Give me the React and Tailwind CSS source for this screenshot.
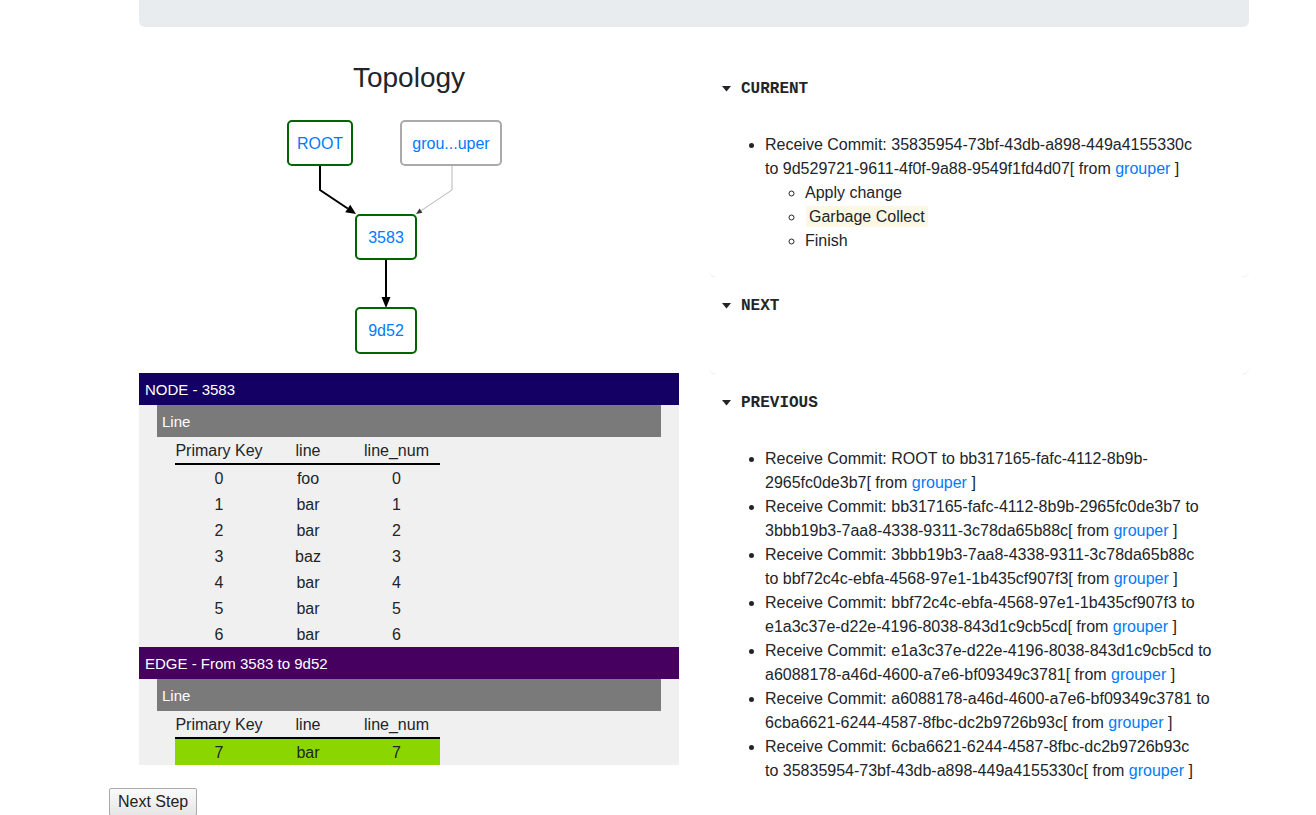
import React from 'react'

const nodeRows = [
  [0, 'foo', 0],
  [1, 'bar', 1],
  [2, 'bar', 2],
  [3, 'baz', 3],
  [4, 'bar', 4],
  [5, 'bar', 5],
  [6, 'bar', 6],
]

// commit log, split where the reference wraps
const previous = [
  ['Receive Commit: ROOT to bb317165-fafc-4112-8b9b-', '2965fc0de3b7'],
  ['Receive Commit: bb317165-fafc-4112-8b9b-2965fc0de3b7 to', '3bbb19b3-7aa8-4338-9311-3c78da65b88c'],
  ['Receive Commit: 3bbb19b3-7aa8-4338-9311-3c78da65b88c', 'to bbf72c4c-ebfa-4568-97e1-1b435cf907f3'],
  ['Receive Commit: bbf72c4c-ebfa-4568-97e1-1b435cf907f3 to', 'e1a3c37e-d22e-4196-8038-843d1c9cb5cd'],
  ['Receive Commit: e1a3c37e-d22e-4196-8038-843d1c9cb5cd to', 'a6088178-a46d-4600-a7e6-bf09349c3781'],
  ['Receive Commit: a6088178-a46d-4600-a7e6-bf09349c3781 to', '6cba6621-6244-4587-8fbc-dc2b9726b93c'],
  ['Receive Commit: 6cba6621-6244-4587-8fbc-dc2b9726b93c', 'to 35835954-73bf-43db-a898-449a4155330c'],
]

function Caret() {
  return (
    <svg width="9" height="6" viewBox="0 0 9 6" className="shrink-0">
      <polygon points="0,0 9,0 4.5,5.5" fill="#212529" />
    </svg>
  )
}

function Section({ title, children, last }) {
  return (
    <div className={`bg-white rounded-lg shadow-[0_2px_2px_-1px_rgba(0,0,0,0.1)] pl-[13px] pr-3 pt-5 ${last ? 'pb-12' : 'pb-6'}`}>
      <div className="flex items-center gap-[10px] h-[18px]">
        <Caret />
        <span className="font-['Liberation_Mono',monospace] font-bold text-base">{title}</span>
      </div>
      <div className="mt-[35px]">{children}</div>
    </div>
  )
}

function From() {
  return (
    <>
      [ from <a href="#" className="text-[#007bff]">grouper</a> ]
    </>
  )
}

function Topology() {
  return (
    <svg width="540" height="273" className="block mt-[5px]" fontFamily="Liberation Sans, Arial, sans-serif" fontSize="16">
      {/* edges */}
      <path d="M181 65 L181 90 L208.7 108.5" stroke="#000" strokeWidth="2" fill="none" />
      <polygon points="217,114 206.2,112.2 211.2,104.8" fill="#000" />
      <path d="M313 65 L313 90 L282 110.7" stroke="#b5b5b5" strokeWidth="1" fill="none" />
      <polygon points="277,114 280.6,108.6 283.4,112.8" fill="#333" />
      <path d="M247 159 L247 198" stroke="#000" strokeWidth="2" />
      <polygon points="242.5,197 251.5,197 247,208" fill="#000" />

      {/* nodes */}
      <rect x="149" y="21" width="64" height="44" rx="4" fill="#fff" stroke="#006400" strokeWidth="2" />
      <text x="181" y="48.5" textAnchor="middle" fill="#007bff">ROOT</text>
      <rect x="262" y="21" width="100" height="44" rx="4" fill="#fff" stroke="#aaaaaa" strokeWidth="2" />
      <text x="312" y="48.5" textAnchor="middle" fill="#007bff">grou...uper</text>
      <rect x="217" y="115" width="60" height="44" rx="4" fill="#fff" stroke="#006400" strokeWidth="2" />
      <text x="247" y="142.5" textAnchor="middle" fill="#007bff">3583</text>
      <rect x="217" y="208" width="60" height="45" rx="4" fill="#fff" stroke="#006400" strokeWidth="2" />
      <text x="247" y="236" textAnchor="middle" fill="#007bff">9d52</text>
    </svg>
  )
}

function LineTable({ rows, highlight }) {
  return (
    <table className="ml-[18px] border-separate border-spacing-0 text-base">
      <thead>
        <tr className="h-[28px]">
          <th className="w-[88px] p-0 pt-px font-normal text-center border-b-2 border-black">Primary Key</th>
          <th className="w-[90px] p-0 pt-px font-normal text-center border-b-2 border-black">line</th>
          <th className="w-[87px] p-0 pt-px font-normal text-center border-b-2 border-black">line_num</th>
        </tr>
      </thead>
      <tbody>
        {rows.map((r, idx) => (
          <tr key={idx} className={`h-[26px] ${highlight ? 'bg-[#8cd600]' : ''}`}>
            <td className="p-0 pt-[2px] text-center">{r[0]}</td>
            <td className="p-0 pt-[2px] text-center">{r[1]}</td>
            <td className="p-0 pt-[2px] text-center">{r[2]}</td>
          </tr>
        ))}
      </tbody>
    </table>
  )
}

function Panel({ title, color, rows, highlight }) {
  return (
    <div>
      <div className={`h-8 px-[6px] pt-px flex items-center text-white text-[15px] ${color}`}>{title}</div>
      <div className="bg-[#f0f0f0] px-[18px]">
        <div className="h-8 bg-[#7a7a7a] text-white text-[15px] pl-[5px] pt-px flex items-center">Line</div>
        <LineTable rows={rows} highlight={highlight} />
      </div>
    </div>
  )
}

export default function App() {
  return (
    <div className="min-h-screen bg-white text-[#212529] font-['Liberation_Sans',Arial,sans-serif] leading-6">
      <div className="w-[1110px] ml-[139px]">
        <div className="h-[27px] bg-[#e9ecef] rounded-b-md" />

        <div className="grid grid-cols-2 gap-[30px] items-start">
          {/* Left: topology + selected node/edge */}
          <div>
            <h3 className="mt-[34px] text-[28px] leading-[34px] font-medium text-center">Topology</h3>
            <Topology />
            <Panel title="NODE - 3583" color="bg-[#140064]" rows={nodeRows} />
            <Panel title="EDGE - From 3583 to 9d52" color="bg-[#46005f]" rows={[[7, 'bar', 7]]} highlight />
            <button className="mt-[23px] -ml-[30px] h-[28px] px-2 border border-[#aaaaaa] rounded-[2px] bg-gradient-to-b from-[#fafafa] to-[#e6e6e6] text-base text-[#222]">
              Next Step
            </button>
          </div>

          {/* Right: commit log */}
          <div className="mt-[33px]">
            <Section title="CURRENT">
              <ul className="list-disc pl-[43px]">
                <li>
                  Receive Commit: 35835954-73bf-43db-a898-449a4155330c
                  <br />
                  to 9d529721-9611-4f0f-9a88-9549f1fd4d07<From />
                  <ul className="list-[circle] pl-10">
                    <li>Apply change</li>
                    <li>
                      <span className="ml-px px-[3px] py-[2px] bg-[#fcf8e3]">Garbage Collect</span>
                    </li>
                    <li>Finish</li>
                  </ul>
                </li>
              </ul>
            </Section>
            <Section title="NEXT" />
            <Section title="PREVIOUS" last>
              <ul className="list-disc pl-[43px]">
                {previous.map((p, idx) => (
                  <li key={idx}>
                    {p[0]}
                    <br />
                    {p[1]}<From />
                  </li>
                ))}
              </ul>
            </Section>
          </div>
        </div>
      </div>
    </div>
  )
}
